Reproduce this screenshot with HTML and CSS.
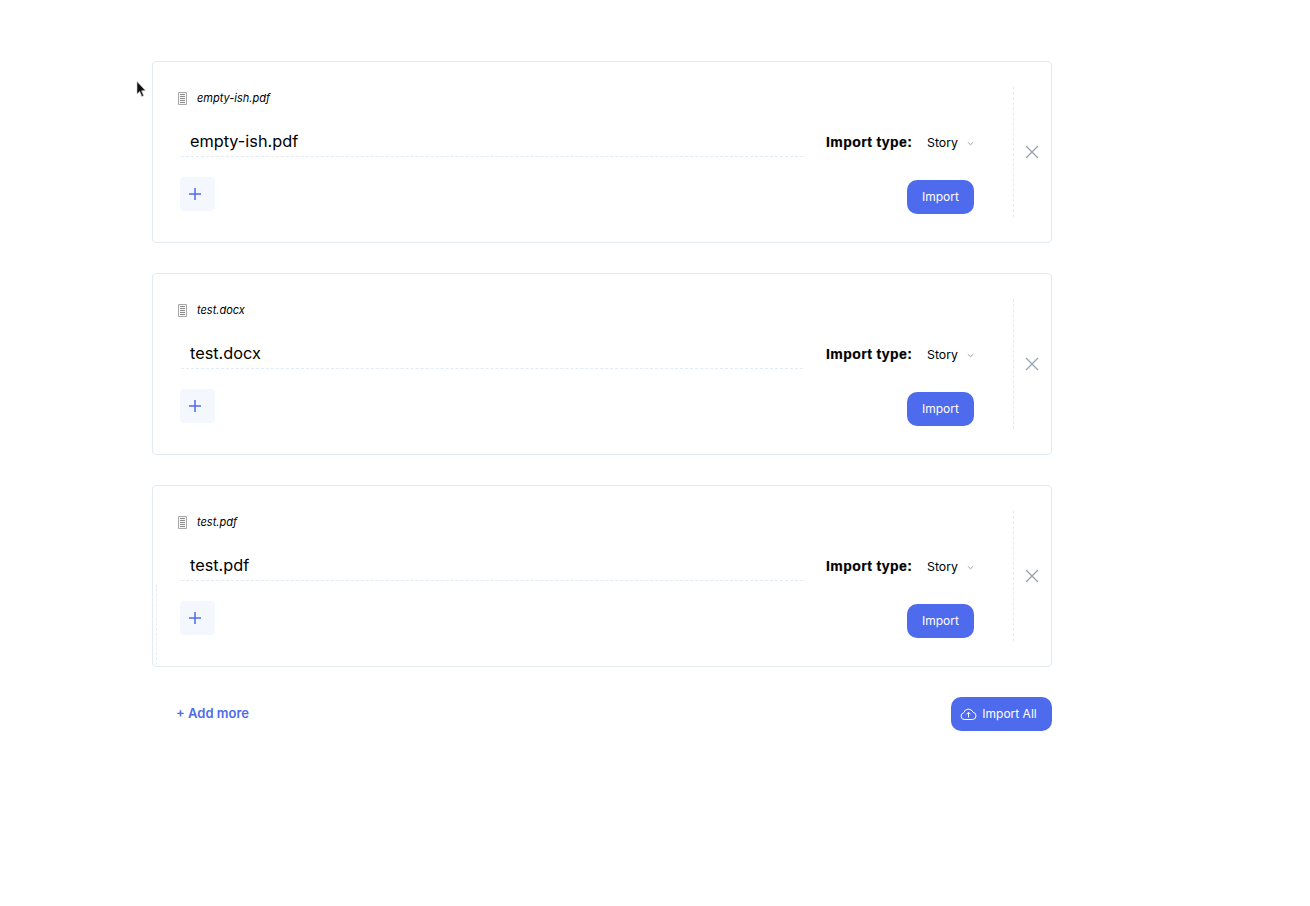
FILE: index.html
```html
<!DOCTYPE html>
<html lang="en">
<head>
<meta charset="utf-8">
<title>Import</title>
<link rel="stylesheet" href="styles.css">
</head>
<body>
<svg class="cursor" width="12" height="18" viewBox="0 0 12 18"><path d="M1 0.5 L1 13 L3.800 10.400 L5.800 15.600 L7.600 14.800 L5.600 9.800 L9.400 9.600 Z" fill="#111" stroke="#ccc" stroke-width="0.6"/></svg>
<main class="page">
  <section class="card">
    <div class="main">
      <div class="head">
        <svg class="doc" width="11" height="13" viewBox="0 0 11 13"><path d="M1.500 .5H9.500V12.500H1.500Z" fill="#f6f6f6" stroke="#a8a8a8"/><path d="M3 2.500H8M3 4.500H8M3 6.500H8M3 8.500H8M3 10.500H8" stroke="#8c8c8c"/></svg>
        <span class="fname">empty-ish.pdf</span>
      </div>
      <div class="row">
        <div class="name">empty-ish.pdf</div>
        <div class="type"><b class="label">Import type:</b><span class="story">Story</span><svg class="chev" width="7" height="5" viewBox="0 0 7 5"><path d="M.8 1.200 3.500 3.800 6.200 1.200" fill="none" stroke="#9aa3ad"/></svg></div>
      </div>
      <div class="foot">
        <div class="tile"><svg width="14" height="14" viewBox="0 0 14 14"><path d="M7 1V13M1 7H13" stroke="#4f6bed" stroke-width="1.500"/></svg></div>
        <button class="btn">Import</button>
      </div>
    </div>
    <div class="close"><svg width="14" height="14" viewBox="0 0 14 14"><path d="M1 1 13 13M13 1 1 13" stroke="#94a3ae" stroke-width="1.200"/></svg></div>
  </section>
  <section class="card">
    <div class="main">
      <div class="head">
        <svg class="doc" width="11" height="13" viewBox="0 0 11 13"><path d="M1.500 .5H9.500V12.500H1.500Z" fill="#f6f6f6" stroke="#a8a8a8"/><path d="M3 2.500H8M3 4.500H8M3 6.500H8M3 8.500H8M3 10.500H8" stroke="#8c8c8c"/></svg>
        <span class="fname">test.docx</span>
      </div>
      <div class="row">
        <div class="name">test.docx</div>
        <div class="type"><b class="label">Import type:</b><span class="story">Story</span><svg class="chev" width="7" height="5" viewBox="0 0 7 5"><path d="M.8 1.200 3.500 3.800 6.200 1.200" fill="none" stroke="#9aa3ad"/></svg></div>
      </div>
      <div class="foot">
        <div class="tile"><svg width="14" height="14" viewBox="0 0 14 14"><path d="M7 1V13M1 7H13" stroke="#4f6bed" stroke-width="1.500"/></svg></div>
        <button class="btn">Import</button>
      </div>
    </div>
    <div class="close"><svg width="14" height="14" viewBox="0 0 14 14"><path d="M1 1 13 13M13 1 1 13" stroke="#94a3ae" stroke-width="1.200"/></svg></div>
  </section>
  <section class="card ghosted">
    <div class="main">
      <div class="head">
        <svg class="doc" width="11" height="13" viewBox="0 0 11 13"><path d="M1.500 .5H9.500V12.500H1.500Z" fill="#f6f6f6" stroke="#a8a8a8"/><path d="M3 2.500H8M3 4.500H8M3 6.500H8M3 8.500H8M3 10.500H8" stroke="#8c8c8c"/></svg>
        <span class="fname">test.pdf</span>
      </div>
      <div class="row">
        <div class="name">test.pdf</div>
        <div class="type"><b class="label">Import type:</b><span class="story">Story</span><svg class="chev" width="7" height="5" viewBox="0 0 7 5"><path d="M.8 1.200 3.500 3.800 6.200 1.200" fill="none" stroke="#9aa3ad"/></svg></div>
      </div>
      <div class="foot">
        <div class="tile"><svg width="14" height="14" viewBox="0 0 14 14"><path d="M7 1V13M1 7H13" stroke="#4f6bed" stroke-width="1.500"/></svg></div>
        <button class="btn">Import</button>
      </div>
    </div>
    <div class="close"><svg width="14" height="14" viewBox="0 0 14 14"><path d="M1 1 13 13M13 1 1 13" stroke="#94a3ae" stroke-width="1.200"/></svg></div>
  </section>
  <div class="actions">
    <a class="add">+ Add more</a>
    <button class="btn all"><svg width="17" height="15" viewBox="0 0 17 15"><path d="M5 13.500H4.200A3.400 3.400 0 0 1 3.700 6.800 4.900 4.900 0 0 1 13 6.200 3.700 3.700 0 0 1 12.800 13.500H5Z" fill="none" stroke="#fff"/><path d="M8.500 11.500V6.500M6.500 8.300 8.500 6.300 10.500 8.300" fill="none" stroke="#fff"/></svg>Import All</button>
  </div>
</main>
</body>
</html>
```
FILE: styles.css
```css
* { box-sizing: border-box; }
html, body { margin: 0; padding: 0; background: #fff; }
body { font-family: Inter, "Liberation Sans", sans-serif; color: #000; height: 906px; overflow: hidden; }
.cursor { position: absolute; left: 136px; top: 81px; }
.page { width: 900px; margin-left: 152px; padding-top: 61px; display: flex; flex-direction: column; gap: 30px; }
.card { position: relative; height: 182px; display: flex; padding: 25px 0 25px 24px; border: 1px solid #e2eaf2; border-radius: 4px; background: #fff; }
.ghosted::before { content: ""; position: absolute; left: 3px; top: 98px; bottom: 1px; border-left: 1px dashed #e8edf3; }
.main { width: 797px; flex: none; display: flex; flex-direction: column; }
.head { height: 22px; display: flex; align-items: center; }
.doc { margin-right: 9px; flex: none; }
.fname { font-size: 11px; font-style: italic; line-height: 22px; }
.row { display: flex; align-items: flex-start; margin-top: 16px; margin-left: 4px; }
.name { flex: none; width: 622px; height: 32px; padding-left: 9px; padding-top: 2px; border-bottom: 1px dashed #e2eaf2; font-size: 16.300px; line-height: 28px; }
.type { display: flex; flex: none; align-items: center; height: 33px; margin-left: 23px; }
.label { flex: none; width: 101px; font-family: "Liberation Sans", sans-serif; font-size: 14px; letter-spacing: .45px; -webkit-text-stroke: .2px #000; }
.story { flex: none; font-size: 12.300px; width: 40px; margin-top: 2px; }
.chev { flex: none; margin-top: 4px; }
.foot { display: flex; justify-content: space-between; margin-top: 19px; }
.tile { width: 35px; height: 34px; margin-left: 3px; border-radius: 4px; background: #f4f7fd; display: flex; align-items: center; padding-left: 8px; }
.btn { height: 34px; width: 67px; margin-top: 3px; padding: 0 0 1px; border: 0; border-radius: 10px; background: #4f6bed; color: #fff; font: 400 12px Inter, "Liberation Sans", sans-serif; }
.close { width: 39px; height: 130px; margin-left: 39px; border-left: 1px dashed #e2eaf2; display: flex; align-items: center; padding-left: 11px; }
.actions { display: flex; justify-content: space-between; align-items: center; height: 34px; padding-left: 24px; }
.add { color: #4f6bed; font-size: 13px; font-weight: 600; margin-top: -2px; }
.all { width: 101px; margin-top: 0; display: flex; align-items: center; justify-content: center; gap: 5px; padding-right: 6px; }
```
